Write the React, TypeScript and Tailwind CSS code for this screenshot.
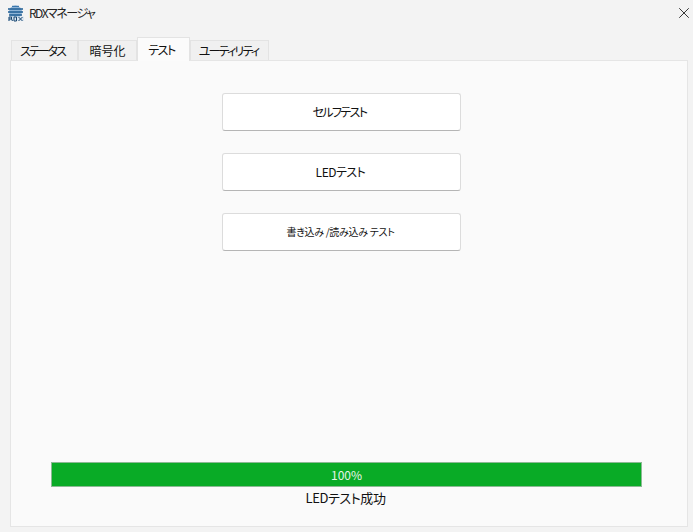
import { X } from "lucide-react";

const font = { fontFamily: '"Noto Sans CJK JP", "Liberation Sans", sans-serif' };

const tabs = [
  { label: "ステータス", width: "w-[67px]", track: "tracking-[-2px] pr-[4px]" },
  { label: "暗号化", width: "w-[59px]", track: "" },
  { label: "テスト", width: "w-[53px]", track: "tracking-[-1.5px] pr-[4px]", active: true },
  { label: "ユーティリティ", width: "w-[79px]", track: "tracking-[-1.8px] pr-[2px]" },
];

const buttons = [
  { label: "セルフテスト", style: "text-[12px] tracking-[-1.6px] pr-[4px]" },
  { label: "LEDテスト", style: "text-[12px] tracking-[-0.5px] pr-[2px]" },
  { label: "書き込み /読み込み テスト", style: "text-[10px] tracking-[-0.3px] pb-[2px] pr-[2px]" },
];

const AppIcon = () => (
  <svg width="18" height="18" viewBox="0 0 18 18" className="shrink-0">
    <circle cx="8.5" cy="8" r="6.5" fill="#8fb4d6" />
    <path d="M1 5h15M1 8h15M2 11h13" stroke="#1f5d94" strokeWidth="1.4" />
    <path d="M5 2.4h7" stroke="#3b78ad" strokeWidth="1.2" />
    <rect x="1" y="12.5" width="16" height="4.5" fill="#dbe6f0" />
    <path d="M2 17v-4h2.5v2M2 15h2.5l1 2M7 13v4h2.5v-4H7M11.5 13l4 4M15.5 13l-4 4" stroke="#17456f" strokeWidth="1" fill="none" />
  </svg>
);

export default function App() {
  return (
    <div className="w-[693px] h-[532px] bg-[#f3f3f3] flex flex-col overflow-hidden [font-feature-settings:'palt']" style={font}>
      <div className="h-[25px] flex items-center pl-[7px] shrink-0">
        <AppIcon />
        <span className="ml-[4px] text-[12px] tracking-[-1.5px] text-[#222]">RDXマネージャ</span>
        <X className="ml-auto w-[18px] h-[18px] text-[#222]" strokeWidth={1.2} />
      </div>

      <div className="flex items-end h-[35px] pl-[11px] shrink-0 relative z-10">
        {tabs.map((t) =>
          t.active ? (
            <div
              key={t.label}
              className={`${t.width} ${t.track} h-[24px] -mb-px bg-[#fbfbfb] border border-b-0 border-[#e3e3e3] flex items-center justify-center whitespace-nowrap text-[12px] text-[#111]`}
            >
              {t.label}
            </div>
          ) : (
            <div
              key={t.label}
              className={`${t.width} ${t.track} h-[20px] bg-[#f0f0f0] border border-b-0 border-[#e3e3e3] flex items-center justify-center whitespace-nowrap text-[12px] text-[#111]`}
            >
              {t.label}
            </div>
          )
        )}
      </div>

      <div className="flex-1 ml-[10px] mr-[5px] mb-[5px] bg-[#fafafa] border border-[#e5e5e5] flex flex-col">
        <div className="flex flex-col gap-[22px] pt-[32px] pl-[211px]">
          {buttons.map((b) => (
            <button
              key={b.label}
              type="button"
              className={`w-[239px] h-[38px] bg-white rounded-[3px] border border-[#dcdcdc] border-b-[#b5b5b5] flex items-center justify-center whitespace-nowrap text-[#111] ${b.style}`}
            >
              {b.label}
            </button>
          ))}
        </div>

        <div className="mt-auto pb-[19px] pl-[40px] w-[631px] flex flex-col items-center">
          <div className="w-[591px] h-[25px] bg-[#09ab26] border border-[#8cb994] flex items-center justify-center text-[12px] text-[#e6f5e8]">
            100%
          </div>
          <div className="mt-[2px] pr-[2px] h-[18px] leading-[18px] text-[13px] tracking-[-0.4px] text-[#111]">LEDテスト成功</div>
        </div>
      </div>
    </div>
  );
}
